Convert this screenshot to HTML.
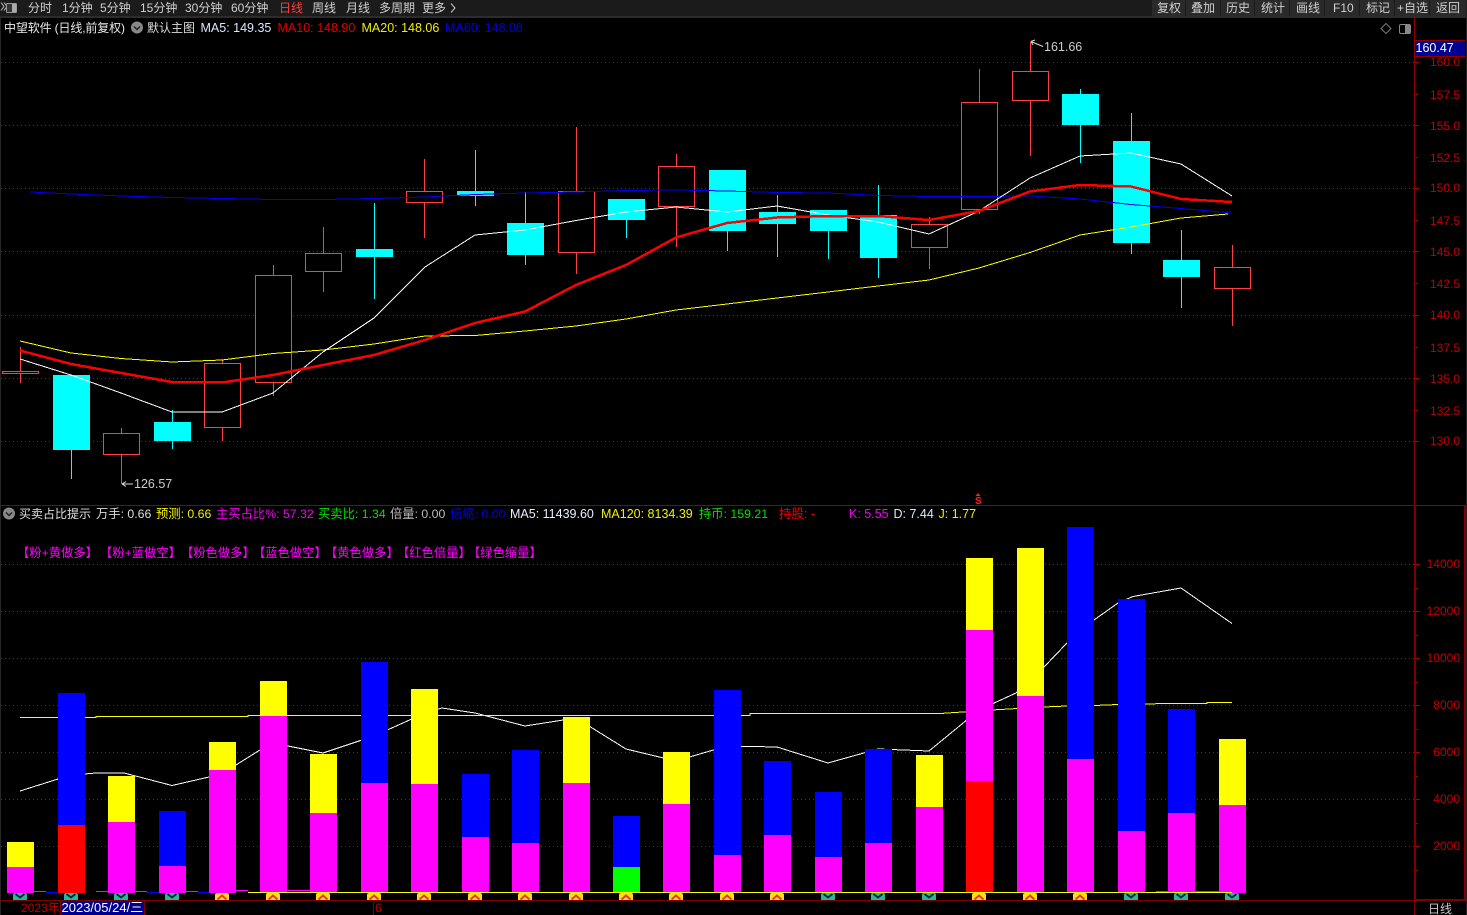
<!DOCTYPE html>
<html>
<head>
<meta charset="utf-8">
<style>
html,body{margin:0;padding:0;background:#000;width:1467px;height:915px;overflow:hidden}
svg{display:block;position:absolute;left:0;top:0}
text{font-family:"Liberation Sans","Noto Sans CJK SC",sans-serif;font-size:12.5px;white-space:pre}
.tb{fill:#d0d0d0;font-size:12px}
.ax{fill:#c00000;font-size:12px;text-anchor:end}
.mg{fill:#f0f;font-size:12.3px}
.c line,.c rect{shape-rendering:crispEdges}
.r line{stroke:#ff4040}
.r rect{fill:#000;stroke:#ff4040}
.b line{stroke:#0ff}
.b rect{fill:#0ff}
.v rect{shape-rendering:crispEdges}
.l{fill:none;shape-rendering:crispEdges}
.d{stroke:#c80000;stroke-width:1;stroke-dasharray:1 3;shape-rendering:crispEdges}
</style>
</head>
<body>
<svg width="1467" height="915" viewBox="0 0 1467 915" xmlns="http://www.w3.org/2000/svg">
<defs>
<g id="t"><path d="M-7 7V2Q-7 0-5 0H5Q7 0 7 2V7Z" fill="#25b89f"/><path d="M-4.500 1L0 4.500L4.500 1" fill="none" stroke="#123" stroke-width="1.800"/></g>
<g id="y"><path d="M-7 7V2Q-7 0-5 0H5Q7 0 7 2V7Z" fill="#ffd820"/><path d="M-4.500 6.500L0 2.500L4.500 6.500" fill="none" stroke="#e8300c" stroke-width="1.800"/></g>
</defs>
<rect width="1467" height="915" fill="#000"/>
<!-- toolbar -->
<rect x="0" y="0" width="1467" height="16" fill="#1b1b1b"/>
<rect x="0" y="16" width="1467" height="2" fill="#2c2c2c"/>
<rect x="0" y="18" width="1" height="897" fill="#262626"/>
<path d="M1 2.500L4 6.500L1 10.500M4 2.500L7 6.500L4 10.500" fill="none" stroke="#bbb" stroke-width="1"/>
<rect x="6.500" y="3.500" width="10" height="9" rx="1" fill="#333" stroke="#999"/>
<rect x="12" y="4" width="4" height="8" fill="#aaa"/>
<text class="tb" x="28" y="12">分时</text>
<text class="tb" x="62" y="12">1分钟</text>
<text class="tb" x="100" y="12">5分钟</text>
<text class="tb" x="140" y="12">15分钟</text>
<text class="tb" x="185" y="12">30分钟</text>
<text class="tb" x="231" y="12">60分钟</text>
<text class="tb" x="279" y="12" style="fill:#ff3c3c">日线</text>
<text class="tb" x="312" y="12">周线</text>
<text class="tb" x="346" y="12">月线</text>
<text class="tb" x="379" y="12">多周期</text>
<text class="tb" x="422" y="12">更多</text>
<path d="M451 3.500L455 8L451 12.500" fill="none" stroke="#c8c8c8" stroke-width="1"/>
<g fill="#2a2a2a" shape-rendering="crispEdges">
<rect x="1152" y="0" width="33" height="16"/><rect x="1186" y="0" width="34" height="16"/><rect x="1221" y="0" width="33" height="16"/><rect x="1255" y="0" width="34" height="16"/><rect x="1290" y="0" width="34" height="16"/><rect x="1325" y="0" width="34" height="16"/><rect x="1360" y="0" width="34" height="16"/><rect x="1395" y="0" width="34" height="16"/><rect x="1430" y="0" width="37" height="16"/>
</g>
<text class="tb" x="1157" y="12">复权</text>
<text class="tb" x="1191" y="12">叠加</text>
<text class="tb" x="1226" y="12">历史</text>
<text class="tb" x="1261" y="12">统计</text>
<text class="tb" x="1296" y="12">画线</text>
<text class="tb" x="1333" y="12">F10</text>
<text class="tb" x="1366" y="12">标记</text>
<text class="tb" x="1397" y="12">+自选</text>
<text class="tb" x="1436" y="12">返回</text>

<!-- price panel grid -->
<g class="d">
<line x1="1" y1="62.500" x2="1414" y2="62.500"/><line x1="1" y1="125.500" x2="1414" y2="125.500"/><line x1="1" y1="188.500" x2="1414" y2="188.500"/><line x1="1" y1="251.500" x2="1414" y2="251.500"/><line x1="1" y1="315.500" x2="1414" y2="315.500"/><line x1="1" y1="378.500" x2="1414" y2="378.500"/><line x1="1" y1="441.500" x2="1414" y2="441.500"/>
<line x1="1" y1="564.500" x2="1414" y2="564.500"/><line x1="1" y1="611.500" x2="1414" y2="611.500"/><line x1="1" y1="658.500" x2="1414" y2="658.500"/><line x1="1" y1="705.500" x2="1414" y2="705.500"/><line x1="1" y1="752.500" x2="1414" y2="752.500"/><line x1="1" y1="799.500" x2="1414" y2="799.500"/><line x1="1" y1="846.500" x2="1414" y2="846.500"/>
</g>

<!-- candles -->
<g class="c">
<g class="r"><line x1="20.500" y1="347" x2="20.500" y2="383"/><rect x="2.500" y="371.500" width="36" height="2"/></g>
<g class="b"><line x1="71.500" y1="375" x2="71.500" y2="479"/><rect x="53" y="375" width="37" height="75"/></g>
<g class="r"><line x1="121.500" y1="428" x2="121.500" y2="484"/><rect x="103.500" y="433.500" width="36" height="21"/></g>
<g class="b"><line x1="172.500" y1="410" x2="172.500" y2="449"/><rect x="154" y="422" width="37" height="19"/></g>
<g class="r"><line x1="222.500" y1="359" x2="222.500" y2="441"/><rect x="204.500" y="363.500" width="36" height="64"/></g>
<g class="r"><line x1="273.500" y1="265" x2="273.500" y2="396"/><rect x="255.500" y="275.500" width="36" height="107"/></g>
<g class="r"><line x1="323.500" y1="227" x2="323.500" y2="292"/><rect x="305.500" y="253.500" width="36" height="18"/></g>
<g class="b"><line x1="374.500" y1="203" x2="374.500" y2="299"/><rect x="356" y="249" width="37" height="8"/></g>
<g class="r"><line x1="424.500" y1="159" x2="424.500" y2="238"/><rect x="406.500" y="191.500" width="36" height="11"/></g>
<g class="b"><line x1="475.500" y1="150" x2="475.500" y2="206"/><rect x="457" y="191" width="37" height="5"/></g>
<g class="b"><line x1="525.500" y1="192" x2="525.500" y2="265"/><rect x="507" y="223" width="37" height="32"/></g>
<g class="r"><line x1="576.500" y1="127" x2="576.500" y2="274"/><rect x="558.500" y="191.500" width="36" height="61"/></g>
<g class="b"><line x1="626.500" y1="199" x2="626.500" y2="238"/><rect x="608" y="199" width="37" height="21"/></g>
<g class="r"><line x1="676.500" y1="154" x2="676.500" y2="247"/><rect x="658.500" y="166.500" width="36" height="40"/></g>
<g class="b"><line x1="727.500" y1="170" x2="727.500" y2="251"/><rect x="709" y="170" width="37" height="61"/></g>
<g class="b"><line x1="777.500" y1="195" x2="777.500" y2="257"/><rect x="759" y="212" width="37" height="12"/></g>
<g class="b"><line x1="828.500" y1="210" x2="828.500" y2="259"/><rect x="810" y="210" width="37" height="21"/></g>
<g class="b"><line x1="878.500" y1="185" x2="878.500" y2="278"/><rect x="860" y="215" width="37" height="43"/></g>
<g class="r"><line x1="929.500" y1="217" x2="929.500" y2="269"/><rect x="911.500" y="224.500" width="36" height="23"/></g>
<g class="r"><line x1="979.500" y1="69" x2="979.500" y2="214"/><rect x="961.500" y="102.500" width="36" height="107"/></g>
<g class="r"><line x1="1030.500" y1="42" x2="1030.500" y2="156"/><rect x="1012.500" y="71.500" width="36" height="29"/></g>
<g class="b"><line x1="1080.500" y1="89" x2="1080.500" y2="163"/><rect x="1062" y="94" width="37" height="31"/></g>
<g class="b"><line x1="1131.500" y1="113" x2="1131.500" y2="254"/><rect x="1113" y="141" width="37" height="102"/></g>
<g class="b"><line x1="1181.500" y1="230" x2="1181.500" y2="308"/><rect x="1163" y="260" width="37" height="17"/></g>
<g class="r"><line x1="1232.500" y1="245" x2="1232.500" y2="326"/><rect x="1214.500" y="267.500" width="36" height="21"/></g>
</g>

<!-- MA lines -->
<polyline class="l" stroke="#0000f0" stroke-width="1" points="30,192 71,194 121,196 172,197.500 222,198.500 273,199.500 323,199.500 374,198.500 425,197 475,194.500 525,193 576,192 626,190.500 676,190 727,191 777,192.500 828,193 878,195.500 929,196.500 979,196.500 1030,196 1080,199 1131,204.500 1181,208.500 1232,213"/>
<polyline class="l" stroke="#ffff00" stroke-width="1" points="20,341 71,353 121,358.500 172,362 222,360 273,353.500 323,350 374,344 425,336 475.500,335.500 525,331 576,326 626,319 676,310 727,304 777,298 828,292 878,286 929,280 979,268 1030,252.500 1080,235 1131,227 1181,218 1228,214"/>
<polyline class="l" stroke="#ffffff" stroke-width="1" points="20,359 71,375 121,393 172,412 222,412 273,393 323,352 374,318 425,267 475,235 525,230 576,220.500 626,212 676,207 727,212 777,206 828,215 878,222 929,234 979,211 1030,178 1080,156 1131,153 1181,164 1232,196"/>
<polyline class="l" stroke="#ff0000" stroke-width="2.500" points="20,350.500 71,364 121,373 172,382 222,382.500 273,375 323,365 374,355 425,340 475,323 525,311.500 576,285 626,265 676,237.500 727,223 777,217.500 828,216 878,216 929,220 979,211 1030,191.500 1080,185 1131,186.500 1181,199 1232,202"/>

<!-- annotations -->
<path d="M1031 41.500L1043 46.500M1031 41.500L1035 40M1031 41.500L1033 45" fill="none" stroke="#ddd" stroke-width="1"/>
<text x="1044" y="51" fill="#ccc">161.66</text>
<path d="M122 484H133M122 484L126 481.500M122 484L126 486.500" fill="none" stroke="#ddd" stroke-width="1"/>
<text x="134" y="488" fill="#ccc">126.57</text>
<path d="M978 493L975.500 496H980.500Z" fill="#ff2020"/>
<text x="975" y="504" fill="#ff2020" style="font-size:10px;font-weight:bold">S</text>

<!-- legend line 1 -->
<text x="4" y="32" fill="#e8e8e8" style="font-size:12px" textLength="121" lengthAdjust="spacing">中望软件 (日线,前复权)</text>
<circle cx="137" cy="27.500" r="6" fill="#888"/><path d="M134 26.500L137 29.500L140 26.500" fill="none" stroke="#222" stroke-width="1.500"/>
<text x="147" y="32" fill="#ddd" style="font-size:12px">默认主图</text>
<text x="200.500" y="32" fill="#d8e8ff">MA5: 149.35</text>
<text x="277.500" y="32" fill="#e00000">MA10: 148.90</text>
<text x="361.500" y="32" fill="#f0f000">MA20: 148.06</text>
<text x="445" y="32" fill="#0000e0">MA60: 148.08</text>
<path d="M1386 23.500L1391 28.500L1386 33.500L1381 28.500Z" fill="none" stroke="#777" stroke-width="1"/>
<rect x="1399.500" y="24.500" width="11" height="9" rx="1.500" fill="none" stroke="#888"/><rect x="1405" y="25" width="5" height="8" fill="#888"/>

<!-- axes -->
<g shape-rendering="crispEdges">
<rect x="1414" y="18" width="1" height="487" fill="#900000"/>
<rect x="0" y="505" width="1466" height="1" fill="#900000"/>
<rect x="1414" y="505" width="2" height="396" fill="#800000"/>
<rect x="1464" y="505" width="2" height="396" fill="#800000"/>
<rect x="0" y="900" width="1466" height="1" fill="#800000"/>
<rect x="1414" y="899" width="52" height="2" fill="#800000"/>
<rect x="1414" y="901" width="1" height="14" fill="#800000"/>
<rect x="1415" y="62" width="4" height="1" fill="#a00000"/><rect x="1415" y="94" width="3" height="1" fill="#a00000"/><rect x="1415" y="125" width="4" height="1" fill="#a00000"/><rect x="1415" y="157" width="3" height="1" fill="#a00000"/><rect x="1415" y="188" width="4" height="1" fill="#a00000"/><rect x="1415" y="220" width="3" height="1" fill="#a00000"/><rect x="1415" y="251" width="4" height="1" fill="#a00000"/><rect x="1415" y="283" width="3" height="1" fill="#a00000"/><rect x="1415" y="315" width="4" height="1" fill="#a00000"/><rect x="1415" y="347" width="3" height="1" fill="#a00000"/><rect x="1415" y="378" width="4" height="1" fill="#a00000"/><rect x="1415" y="410" width="3" height="1" fill="#a00000"/><rect x="1415" y="441" width="4" height="1" fill="#a00000"/>
<rect x="1416" y="564" width="4" height="1" fill="#a00000"/><rect x="1416" y="588" width="2" height="1" fill="#a00000"/><rect x="1416" y="611" width="4" height="1" fill="#a00000"/><rect x="1416" y="635" width="2" height="1" fill="#a00000"/><rect x="1416" y="658" width="4" height="1" fill="#a00000"/><rect x="1416" y="682" width="2" height="1" fill="#a00000"/><rect x="1416" y="705" width="4" height="1" fill="#a00000"/><rect x="1416" y="729" width="2" height="1" fill="#a00000"/><rect x="1416" y="752" width="4" height="1" fill="#a00000"/><rect x="1416" y="776" width="2" height="1" fill="#a00000"/><rect x="1416" y="799" width="4" height="1" fill="#a00000"/><rect x="1416" y="823" width="2" height="1" fill="#a00000"/><rect x="1416" y="846" width="4" height="1" fill="#a00000"/><rect x="1416" y="870" width="2" height="1" fill="#a00000"/>
<rect x="1415" y="40" width="50" height="17" fill="#900000"/>
<rect x="1415" y="41" width="50" height="15" fill="#000090"/>
</g>
<text x="1415.500" y="52" fill="#fff">160.47</text>
<g>
<text class="ax" x="1460" y="66">160.0</text><text class="ax" x="1460" y="99">157.5</text><text class="ax" x="1460" y="130">155.0</text><text class="ax" x="1460" y="162">152.5</text><text class="ax" x="1460" y="192">150.0</text><text class="ax" x="1460" y="225">147.5</text><text class="ax" x="1460" y="256">145.0</text><text class="ax" x="1460" y="288">142.5</text><text class="ax" x="1460" y="319">140.0</text><text class="ax" x="1460" y="352">137.5</text><text class="ax" x="1460" y="383">135.0</text><text class="ax" x="1460" y="415">132.5</text><text class="ax" x="1460" y="445">130.0</text>
<text class="ax" x="1460" y="568">14000</text><text class="ax" x="1460" y="615">12000</text><text class="ax" x="1460" y="662">10000</text><text class="ax" x="1460" y="709">8000</text><text class="ax" x="1460" y="756">6000</text><text class="ax" x="1460" y="803">4000</text><text class="ax" x="1460" y="850">2000</text>
</g>

<!-- lower legend -->
<circle cx="9" cy="513.500" r="6" fill="#888"/><path d="M6 512.500L9 515.500L12 512.500" fill="none" stroke="#222" stroke-width="1.500"/>
<text x="19" y="518" fill="#e0e0e0" style="font-size:12px">买卖占比提示</text>
<text x="96" y="518" fill="#ddd" style="font-size:12.3px">万手: 0.66</text>
<text x="156" y="518" fill="#f0f000" style="font-size:12.3px">预测: 0.66</text>
<text x="216" y="518" fill="#f000f0" style="font-size:12.3px">主买占比%: 57.32</text>
<text x="318" y="518" fill="#00e000" style="font-size:12.3px">买卖比: 1.34</text>
<text x="390" y="518" fill="#bbb" style="font-size:12.3px">倍量: 0.00</text>
<text x="450" y="518" fill="#0000e0" style="font-size:12.3px">倍缩: 0.00</text>
<text x="510" y="518" fill="#e8f0ff">MA5: 11439.60</text>
<text x="601" y="518" fill="#f0f000">MA120: 8134.39</text>
<text x="699" y="518" fill="#00e000" style="font-size:12.3px">持币: 159.21</text>
<text x="779" y="518" fill="#f00000">持股: -</text>
<text x="849" y="518" fill="#f000f0">K: 5.55</text>
<text x="893.500" y="518" fill="#d8e8ff">D: 7.44</text>
<text x="938.500" y="518" fill="#f0f000">J: 1.77</text>
<text class="mg" x="17" y="557">【粉+黄做多】</text>
<text class="mg" x="100" y="557">【粉+蓝做空】</text>
<text class="mg" x="181" y="557">【粉色做多】</text>
<text class="mg" x="253" y="557">【蓝色做空】</text>
<text class="mg" x="325" y="557">【黄色做多】</text>
<text class="mg" x="397" y="557">【红色倍量】</text>
<text class="mg" x="468" y="557">【绿色缩量】</text>

<!-- low lines behind bars -->
<polyline class="l" stroke="#fff" stroke-width="1" points="20,791 58,779 85,774 96,773 124,773 172,785.500 209,777 236,765 260,750 273,743 323,753 374,736 425,713 442,708 475,713 525,726 576,718 626,749 676,761 727,746 777,747 828,763 878,749 929,751 979,710 1016,693 1044,667 1067,643 1094,620 1118,603 1133,596.500 1181,588 1232,623.500"/>
<polyline class="l" stroke="#ffff00" stroke-width="1" points="20,717.500 96,717.500 96,716.500 248,716.500 248,715.500 500,715.500 750,715.500 750,713.500 940,713.500 1000,709.500 1044,707 1067,706 1094,705.500 1118,704.500 1168,703.500 1207,703.500 1207,702.500 1232,702.500"/>

<!-- volume bars -->
<g class="v">
<rect x="7" y="842" width="27" height="25" fill="#ff0"/><rect x="7" y="867" width="27" height="26" fill="#f0f"/>
<rect x="58" y="693" width="27" height="132" fill="#00f"/><rect x="58" y="825" width="27" height="68" fill="#f00"/>
<rect x="108" y="776" width="27" height="46" fill="#ff0"/><rect x="108" y="822" width="27" height="71" fill="#f0f"/>
<rect x="159" y="811" width="27" height="55" fill="#00f"/><rect x="159" y="866" width="27" height="27" fill="#f0f"/>
<rect x="209" y="742" width="27" height="28" fill="#ff0"/><rect x="209" y="770" width="27" height="123" fill="#f0f"/>
<rect x="260" y="681" width="27" height="35" fill="#ff0"/><rect x="260" y="716" width="27" height="177" fill="#f0f"/>
<rect x="310" y="754" width="27" height="59" fill="#ff0"/><rect x="310" y="813" width="27" height="80" fill="#f0f"/>
<rect x="361" y="662" width="27" height="121" fill="#00f"/><rect x="361" y="783" width="27" height="110" fill="#f0f"/>
<rect x="411" y="689" width="27" height="95" fill="#ff0"/><rect x="411" y="784" width="27" height="109" fill="#f0f"/>
<rect x="462" y="774" width="27" height="63" fill="#00f"/><rect x="462" y="837" width="27" height="56" fill="#f0f"/>
<rect x="512" y="750" width="27" height="93" fill="#00f"/><rect x="512" y="843" width="27" height="50" fill="#f0f"/>
<rect x="563" y="717" width="27" height="66" fill="#ff0"/><rect x="563" y="783" width="27" height="110" fill="#f0f"/>
<rect x="613" y="816" width="27" height="51" fill="#00f"/><rect x="613" y="867" width="27" height="26" fill="#0f0"/>
<rect x="663" y="752" width="27" height="52" fill="#ff0"/><rect x="663" y="804" width="27" height="89" fill="#f0f"/>
<rect x="714" y="690" width="27" height="165" fill="#00f"/><rect x="714" y="855" width="27" height="38" fill="#f0f"/>
<rect x="764" y="761" width="27" height="74" fill="#00f"/><rect x="764" y="835" width="27" height="58" fill="#f0f"/>
<rect x="815" y="792" width="27" height="65" fill="#00f"/><rect x="815" y="857" width="27" height="36" fill="#f0f"/>
<rect x="865" y="749" width="27" height="94" fill="#00f"/><rect x="865" y="843" width="27" height="50" fill="#f0f"/>
<rect x="916" y="755" width="27" height="52" fill="#ff0"/><rect x="916" y="807" width="27" height="86" fill="#f0f"/>
<rect x="966" y="558" width="27" height="72" fill="#ff0"/><rect x="966" y="630" width="27" height="151" fill="#f0f"/><rect x="966" y="781" width="27" height="112" fill="#f00"/>
<rect x="1017" y="548" width="27" height="148" fill="#ff0"/><rect x="1017" y="696" width="27" height="197" fill="#f0f"/>
<rect x="1067" y="527" width="27" height="232" fill="#00f"/><rect x="1067" y="759" width="27" height="134" fill="#f0f"/>
<rect x="1118" y="599" width="27" height="232" fill="#00f"/><rect x="1118" y="831" width="27" height="62" fill="#f0f"/>
<rect x="1168" y="709" width="27" height="104" fill="#00f"/><rect x="1168" y="813" width="27" height="80" fill="#f0f"/>
<rect x="1219" y="739" width="27" height="66" fill="#ff0"/><rect x="1219" y="805" width="27" height="88" fill="#f0f"/>
<!-- baseline lines -->
<rect x="34" y="891" width="12" height="1" fill="#f0f"/><rect x="46" y="892" width="12" height="1" fill="#00f"/><rect x="96" y="891" width="12" height="1" fill="#f0f"/><rect x="135" y="891" width="12" height="1" fill="#f0f"/><rect x="147" y="892" width="12" height="1" fill="#00f"/><rect x="186" y="891" width="12" height="1" fill="#f0f"/><rect x="198" y="892" width="11" height="1" fill="#00f"/><rect x="236" y="890" width="12" height="1" fill="#f0f"/>
<rect x="248" y="892" width="984" height="1" fill="#ff0"/>
<rect x="287" y="890" width="23" height="1" fill="#f0f"/>
<rect x="1156" y="891" width="12" height="1" fill="#f0f"/><rect x="1195" y="891" width="24" height="1" fill="#f0f"/>
</g>

<!-- signal chips -->
<use href="#t" x="20" y="893"/><use href="#t" x="71" y="893"/><use href="#t" x="121" y="893"/><use href="#t" x="172" y="893"/>
<use href="#y" x="222" y="893"/><use href="#y" x="273" y="893"/><use href="#y" x="323" y="893"/><use href="#y" x="374" y="893"/><use href="#y" x="424" y="893"/><use href="#y" x="475" y="893"/><use href="#y" x="525" y="893"/><use href="#y" x="576" y="893"/><use href="#y" x="626" y="893"/><use href="#y" x="676" y="893"/><use href="#y" x="727" y="893"/><use href="#y" x="777" y="893"/>
<use href="#t" x="828" y="893"/><use href="#t" x="878" y="893"/><use href="#t" x="929" y="893"/>
<use href="#y" x="979" y="893"/><use href="#y" x="1030" y="893"/><use href="#y" x="1080" y="893"/>
<use href="#t" x="1131" y="893"/><use href="#t" x="1181" y="893"/><use href="#t" x="1232" y="893"/>

<!-- date bar -->
<text x="21" y="912" fill="#c00000" style="font-size:12px">2023年</text>
<rect x="60" y="901" width="1" height="14" fill="#800000" shape-rendering="crispEdges"/>
<rect x="61" y="901" width="83" height="14" fill="#000090" shape-rendering="crispEdges"/>
<rect x="144" y="901" width="1" height="14" fill="#800000" shape-rendering="crispEdges"/>
<text x="61.500" y="912" fill="#fff" style="font-size:13px">2023/05/24/三</text>
<rect x="373" y="901" width="1" height="14" fill="#800000" shape-rendering="crispEdges"/>
<text x="375" y="912" fill="#c00000" style="font-size:12px">6</text>
<text x="1428" y="913" fill="#c8c8c8" style="font-size:12px">日线</text>
<rect x="1466" y="0" width="1" height="915" fill="#222"/>
</svg>
</body>
</html>
